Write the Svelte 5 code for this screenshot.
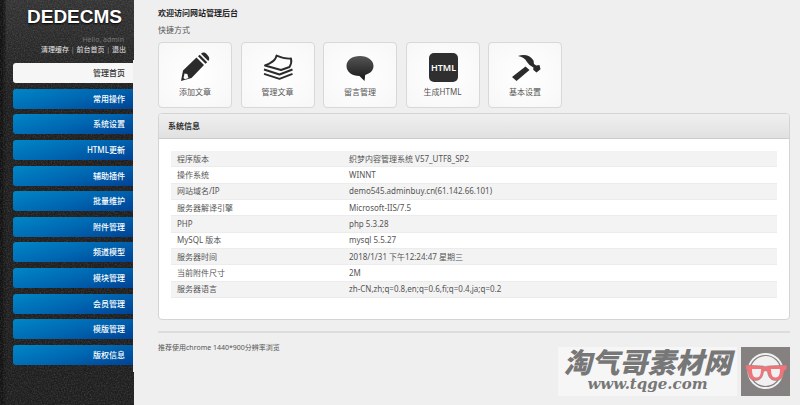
<script>
  const menu = ['管理首页', '常用操作', '系统设置', 'HTML更新', '辅助插件', '批量维护', '附件管理', '频道模型', '模块管理', '会员管理', '模版管理', '版权信息'];
  const shortcuts = [
    ['pencil', '添加文章'],
    ['stack', '管理文章'],
    ['bubble', '留言管理'],
    ['html', '生成HTML'],
    ['hammer', '基本设置']
  ];
  const info = [
    ['程序版本', '织梦内容管理系统 V57_UTF8_SP2'],
    ['操作系统', 'WINNT'],
    ['网站域名/IP', 'demo545.adminbuy.cn(61.142.66.101)'],
    ['服务器解译引擎', 'Microsoft-IIS/7.5'],
    ['PHP', 'php 5.3.28'],
    ['MySQL 版本', 'mysql 5.5.27'],
    ['服务器时间', '2018/1/31 下午12:24:47 星期三'],
    ['当前附件尺寸', '2M'],
    ['服务器语言', 'zh-CN,zh;q=0.8,en;q=0.6,fi;q=0.4,ja;q=0.2']
  ];
</script>

<div class="page">
  <aside>
    <svg class="grain" aria-hidden="true">
      <filter id="grain">
        <feTurbulence type="fractalNoise" baseFrequency="0.7" numOctaves="2" />
        <feColorMatrix values="0 0 0 0 1  0 0 0 0 1  0 0 0 0 1  0.25 0 0 0 -0.09" />
      </filter>
      <rect width="100%" height="100%" filter="url(#grain)" />
    </svg>
    <div class="brand">DEDECMS</div>
    <p class="hello">Hello, admin</p>
    <p class="tools"><a href="#cache">清理缓存</a> | <a href="#site">前台首页</a> | <a href="#logout">退出</a></p>
    <nav>
      {#each menu as item, i}
        <a href="#menu-{i}" class:active={i === 0}>{item}</a>
      {/each}
    </nav>
  </aside>

  <main>
    <h1>欢迎访问网站管理后台</h1>
    <p class="sub">快捷方式</p>
    <div class="cards">
      {#each shortcuts as [icon, label]}
        <a class="card" href="#{icon}">
          <svg viewBox="0 0 32 32" aria-hidden="true">
            {#if icon === 'pencil'}
              <path d="M2 30 4 19.500 17.500 6.500 25 14 12.500 27ZM19 5.300 20.700 3.700 28.200 11.200 26.500 12.800ZM22 2.700C24 .8 26 1.300 28 3.400 30.500 6 31 8 29.300 10Z" fill="#2b2b2b" />
              <path d="m5.500 22.500 2.800.500 1.200 4-3.500 1.300-1.500-1.300Z" fill="#fafafa" />
            {:else if icon === 'stack'}
              <g fill="none" stroke="#2b2b2b" stroke-width="1.900" stroke-linejoin="round">
                <path d="M14.500 4.500C19 6.500 24 8 29 7.500 30 11.500 29 13.500 27.500 16L19 19 3 14.500C9 12 14 9.500 14.500 4.500Z" />
                <path d="m2 18.500 15.500 5 13-5M2 22.800l15.500 5 13-5" />
              </g>
            {:else if icon === 'bubble'}
              <defs><linearGradient id="ink" x2="0" y2="1"><stop stop-color="#555" /><stop offset="1" stop-color="#181818" /></linearGradient></defs>
              <path d="M16 5C24 5 29.500 9.500 29.500 15c0 4.500-3.500 7.500-8.300 9L20.500 30 15.500 25C8 25 2.500 21 2.500 15S8 5 16 5Z" fill="url(#ink)" />
            {:else if icon === 'html'}
              <rect x="2" y="2" width="29" height="29" rx="5" fill="#2f2f2f" />
              <text x="16.500" y="20" text-anchor="middle" font-size="9" font-weight="600" fill="#fff">HTML</text>
            {:else}
              <path d="M9 5C15 2.800 21 4 24.500 9.500L25 13l2.300 1.500 3.200-.500 1 4.200-4 3.300-3.300-2.800.200-2.300L20.500 14 18 11C16.500 7.500 13 6 9 5ZM16.500 15.500 20.500 19 7.500 30 3 26Z" fill="#2b2b2b" />
            {/if}
          </svg>
          <span>{label}</span>
        </a>
      {/each}
    </div>

    <section>
      <h2>系统信息</h2>
      <table>
        <tbody>
          {#each info as [name, value]}
            <tr><th scope="row">{name}</th><td>{value}</td></tr>
          {/each}
        </tbody>
      </table>
    </section>
    <footer>推荐使用chrome 1440*900分辨率浏览</footer>
  </main>

  <div class="mark">
    <div class="words">
      <strong>淘气哥素材网</strong>
      <em>www.tqge.com</em>
    </div>
    <svg viewBox="0 0 49 49" aria-hidden="true">
      <rect width="49" height="49" fill="#858181" />
      <circle cx="24.500" cy="24" r="18" fill="#f1f1f1" />
      <circle cx="24.500" cy="24" r="15.500" fill="none" stroke="#858181" stroke-width="1.200" />
      <path d="M4.500 18 22 19Q24.500 20 27 19L46 18 45.500 22.500 43 24C42.500 30 40.500 33.500 34.500 33.500 29 33.500 27 29 26.500 24.500Q24.500 23 22.500 24.500C22 29 20 33.500 15 33.500 9 33.500 7.500 30 7 24L5 22.500Z" fill="#f0747a" stroke="#858181" stroke-width=".500" />
      <path d="M11 22H20C20 27 19 30.500 15.500 30.500S11 27 11 22ZM30 22H39C39 27 38 30.500 34.500 30.500S30 27 30 22Z" fill="#f1f1f1" />
    </svg>
  </div>
</div>

<style>
  :global(body) {
    margin: 0;
    background: #efefef;
  }
  .page {
    position: relative;
    display: flex;
    min-height: 100vh;
    font: 8px/16px "Noto Sans", "Noto Sans CJK SC", sans-serif;
    color: #555;
  }
  p, h1, h2 {
    margin: 0;
    font-size: 8px;
  }
  a {
    color: inherit;
    text-decoration: none;
  }
  aside {
    position: relative;
    box-sizing: border-box;
    flex: 0 0 134px;
    padding: 6px 0 0 13px;
    background: linear-gradient(90deg, #111 0 3px, #202020 4px, #151515 5px, transparent 6px), linear-gradient(#323232, #1e1e1e 100px);
    text-align: right;
  }
  .grain {
    position: absolute;
    inset: 0;
    width: 100%;
    height: 100%;
  }
  .brand, .hello, .tools, nav {
    position: relative;
  }
  .brand {
    padding-right: 12px;
    font: bold 19px/22px "Liberation Sans", sans-serif;
    color: #fff;
    text-shadow: 0 1px 2px #000;
  }
  .hello {
    padding: 6px 10px 0 0;
    font-size: 7px;
    line-height: 12px;
    color: #777;
  }
  .tools {
    padding-right: 8px;
    font-size: 7px;
    line-height: 8px;
    color: #999;
    white-space: nowrap;
  }
  .tools a {
    color: #e4e4e4;
  }
  nav {
    display: flex;
    flex-direction: column;
    justify-content: space-between;
    height: 302px;
    margin-top: 6px;
    padding: 3px 0 7px;
    border-right: 1px solid #efefef;
  }
  nav a {
    padding-right: 8px;
    border-radius: 3px 0 0 3px;
    background: linear-gradient(165deg, #0086c6, #0068b2 50%, #004296);
    line-height: 20px;
    font-weight: 500;
    color: #fff;
  }
  nav a.active {
    background: #f6f6f6;
    color: #333;
  }
  main {
    flex: 1;
    min-width: 0;
    padding: 5px 10px 0 24px;
  }
  h1 {
    color: #222;
  }
  .sub {
    padding-top: 1px;
  }
  .cards {
    display: flex;
    justify-content: space-between;
    max-width: 404px;
    margin-top: 4px;
  }
  .card {
    box-sizing: border-box;
    display: flex;
    flex-direction: column;
    align-items: center;
    width: 74px;
    padding: 8px 0 7px;
    border: 1px solid #d8d8d8;
    border-radius: 4px;
    background: radial-gradient(#fff, #f7f7f7);
  }
  .card svg {
    width: 32px;
    height: 32px;
    margin-bottom: 1px;
  }
  section {
    margin-top: 5px;
    border: 1px solid #d4d4d4;
    border-radius: 4px;
    background: #fff;
    overflow: hidden;
  }
  h2 {
    padding: 0 9px;
    border-bottom: 1px solid #ccc;
    background: linear-gradient(#efefef, #e1e1e1);
    line-height: 24px;
    color: #333;
  }
  table {
    width: calc(100% - 24px);
    height: 147px;
    margin: 12px 12px 21px;
    border-collapse: collapse;
    table-layout: fixed;
  }
  th, td {
    padding: 0 6px;
    border-bottom: 1px solid #ececec;
    line-height: 14px;
    font-weight: 400;
    text-align: left;
  }
  th {
    width: 160px;
  }
  tr:nth-child(odd) {
    background: #f3f3f3;
  }
  footer {
    margin-top: 11px;
    padding: 7px 0;
    border-top: 2px solid #dcdcdc;
    font-size: 7px;
  }
  .mark {
    position: absolute;
    right: 10px;
    bottom: 9px;
    display: flex;
    gap: 4px;
  }
  .words {
    display: flex;
    flex-direction: column;
    align-items: center;
    width: 179px;
    background: #f6f6f6;
    color: #777;
  }
  .words strong {
    font: italic 900 28px/29px "Noto Sans CJK SC", sans-serif;
  }
  .words em {
    font: italic bold 15px/16px "DejaVu Serif", serif;
  }
  .mark svg {
    width: 49px;
    height: 49px;
  }
</style>
